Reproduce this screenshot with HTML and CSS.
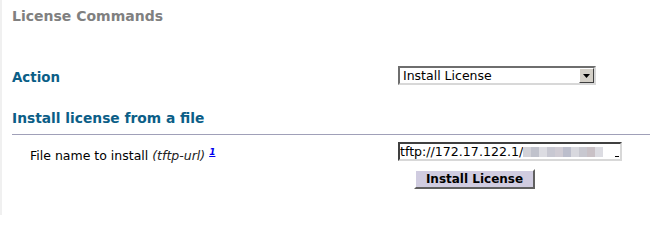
FILE: index.html
```html
<!DOCTYPE html>
<html>
<head>
<meta charset="utf-8">
<link rel="stylesheet" href="styles.css">
</head>
<body>
<div class="page">
  <h1 class="title">License Commands</h1>
  <div class="row action-row">
    <div class="action-label">Action</div>
    <div class="control">
      <div class="select">
        <span class="select-text">Install License</span>
        <span class="select-btn"><svg width="7" height="4" viewBox="0 0 7 4"><path d="M0 0H7L3.5 4Z" fill="#000"/></svg></span>
      </div>
    </div>
  </div>
  <h2 class="section">Install license from a file</h2>
  <div class="row field-row">
    <div class="field-label">File name to install <i>(tftp-url)</i> <a class="note" href="#">1</a></div>
    <div class="control">
      <div class="input"><span class="input-text">tftp://172.17.122.1/</span><span class="blur"><i style="background:#d2d2d8"></i><i style="background:#c0c2cc"></i><i style="background:#dcdce2"></i><i style="background:#c8c8d2"></i><i style="background:#d0ccd4"></i><i style="background:#bcbecc"></i><i style="background:#d8d8de"></i><i style="background:#c8c8d0"></i><i style="background:#c9c1c6"></i><i style="background:#dcdce2"></i></span><span class="cursor"></span></div>
      <div class="btn-wrap"><button class="btn">Install License</button></div>
    </div>
  </div>
</div>
</body>
</html>
```
FILE: styles.css
```css
html, body { margin: 0; padding: 0; background: #fff; }
body { width: 650px; height: 215px; overflow: hidden; font-family: "DejaVu Sans", Verdana, sans-serif; }
.page { border-left: 2px solid #f0f0f0; height: 215px; padding-left: 10px; box-sizing: border-box; }
.title { margin: 0; padding-top: 6px; font-size: 14px; line-height: 20px; font-weight: bold; color: #808080; }
.row { display: flex; align-items: flex-start; }
.control { margin-left: auto; width: 252px; display: flex; flex-direction: column; }
.action-row { margin-top: 40px; }
.action-label { font-size: 13.4px; font-weight: bold; color: #0b5e87; line-height: 18px; padding-top: 3px; }
.select { width: 198px; height: 19px; box-sizing: border-box; border: 2px solid; border-color: #6e6e6e #d8d8d8 #d8d8d8 #6e6e6e; display: flex; align-items: center; background: #fff; }
.select-text { flex: 1; font-size: 12.5px; padding-left: 3px; color: #000; line-height: 15px; }
.select-btn { width: 15px; height: 15px; box-sizing: border-box; background: #d4d0c8; border: 1px solid; border-color: #fff #404040 #404040 #fff; display: flex; align-items: center; justify-content: center; }
.section { margin: 22px 0 0 0; font-size: 13.8px; font-weight: bold; color: #0b5e87; line-height: 18px; padding-bottom: 7px; border-bottom: 1px solid #a0a0b8; }
.field-row { margin-top: 7px; }
.field-label { font-size: 12.5px; color: #000; padding-left: 18px; padding-top: 3px; line-height: 15px; }
.field-label i { color: #222; }
.note { font-size: 9px; font-weight: bold; font-style: italic; color: #0000ee; vertical-align: 5px; }
.input { width: 224px; height: 19px; box-sizing: border-box; border: 2px solid; border-color: #404040 #d8d8d8 #d8d8d8 #404040; display: flex; align-items: center; background: #fff; overflow: hidden; position: relative; }
.input-text { font-size: 12.6px; color: #000; white-space: nowrap; }
.blur { display: flex; height: 10px; }
.blur i { display: block; width: 8px; height: 10px; }
.cursor { position: absolute; right: 1px; bottom: 2px; width: 4px; height: 1px; background: #000; }
.btn-wrap { padding-left: 16px; margin-top: 7px; }
.btn { font-family: "DejaVu Sans", Verdana, sans-serif; font-size: 12px; font-weight: bold; color: #000; background: #d0cce0; height: 20px; width: 121px; padding: 0; border: 2px solid; border-color: #fff #606060 #606060 #fff; line-height: 14px; }
```
